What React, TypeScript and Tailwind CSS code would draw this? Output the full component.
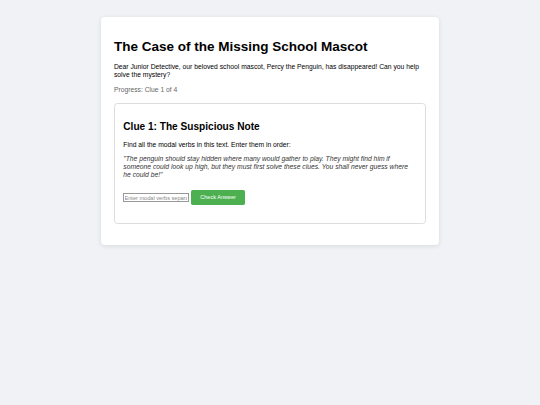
import React, { useState } from 'react';

const font = { fontFamily: '"Liberation Sans", Arial, Helvetica, sans-serif' };

export default function App() {
    const [answer, setAnswer] = useState('');

    return (
        <div className="min-h-[405px] bg-[#f0f2f5] pt-[17px] text-[#333]" style={font}>
            <div className="mx-auto w-[337.5px] rounded-[4px] bg-white px-[12.7px] pt-[12.7px] pb-[12.7px] shadow-[0_1px_5px_rgba(0,0,0,0.1)]">
                <h1 className="mt-[9px] mb-[9px] text-[13.5px] font-bold leading-[15.5px] text-black">
                    The Case of the Missing School Mascot
                </h1>
                <p className="text-[6.75px] leading-[7.8px] text-black">
                    Dear Junior Detective, our beloved school mascot, Percy the Penguin, has disappeared! Can you help solve the mystery?
                </p>
                <p className="mt-[6.75px] text-[6.75px] leading-[7.8px] text-[#666]">Progress: Clue 1 of 4</p>

                <div className="mt-[9.8px] rounded-[3.4px] border-[0.6px] border-[#ddd] px-[8.4px] pt-[8.4px] pb-[18px]">
                    <h2 className="mt-[8.4px] mb-[8.4px] text-[10.1px] font-bold leading-[11.6px] text-black">
                        Clue 1: The Suspicious Note
                    </h2>
                    <p className="text-[6.75px] leading-[7.8px] text-black">
                        Find all the modal verbs in this text. Enter them in order:
                    </p>
                    <p className="mt-[6.75px] text-[6.75px] italic leading-[7.8px] text-[#333]">
                        "The penguin should stay hidden where many would gather to play. They might find him if someone could look up high, but they must first solve these clues. You shall never guess where he could be!"
                    </p>
                    <div className="mt-[11.3px] flex items-center gap-[2px]">
                        <input
                            value={answer}
                            onChange={(e) => setAnswer(e.target.value)}
                            placeholder="Enter modal verbs separated by commas"
                            className="ml-[-0.6px] h-[8.6px] w-[66px] border-[0.8px] border-[#999] bg-white px-[0.8px] text-[5.6px] leading-[7px] text-black placeholder:text-[#888] outline-none"
                        />
                        <button className="h-[15.2px] rounded-[1.7px] bg-[#4caf50] px-[9.4px] text-[5.6px] leading-[6.5px] text-white">
                            Check Answer
                        </button>
                    </div>
                </div>
                <div className="h-[8.4px]" />
            </div>
        </div>
    );
}
